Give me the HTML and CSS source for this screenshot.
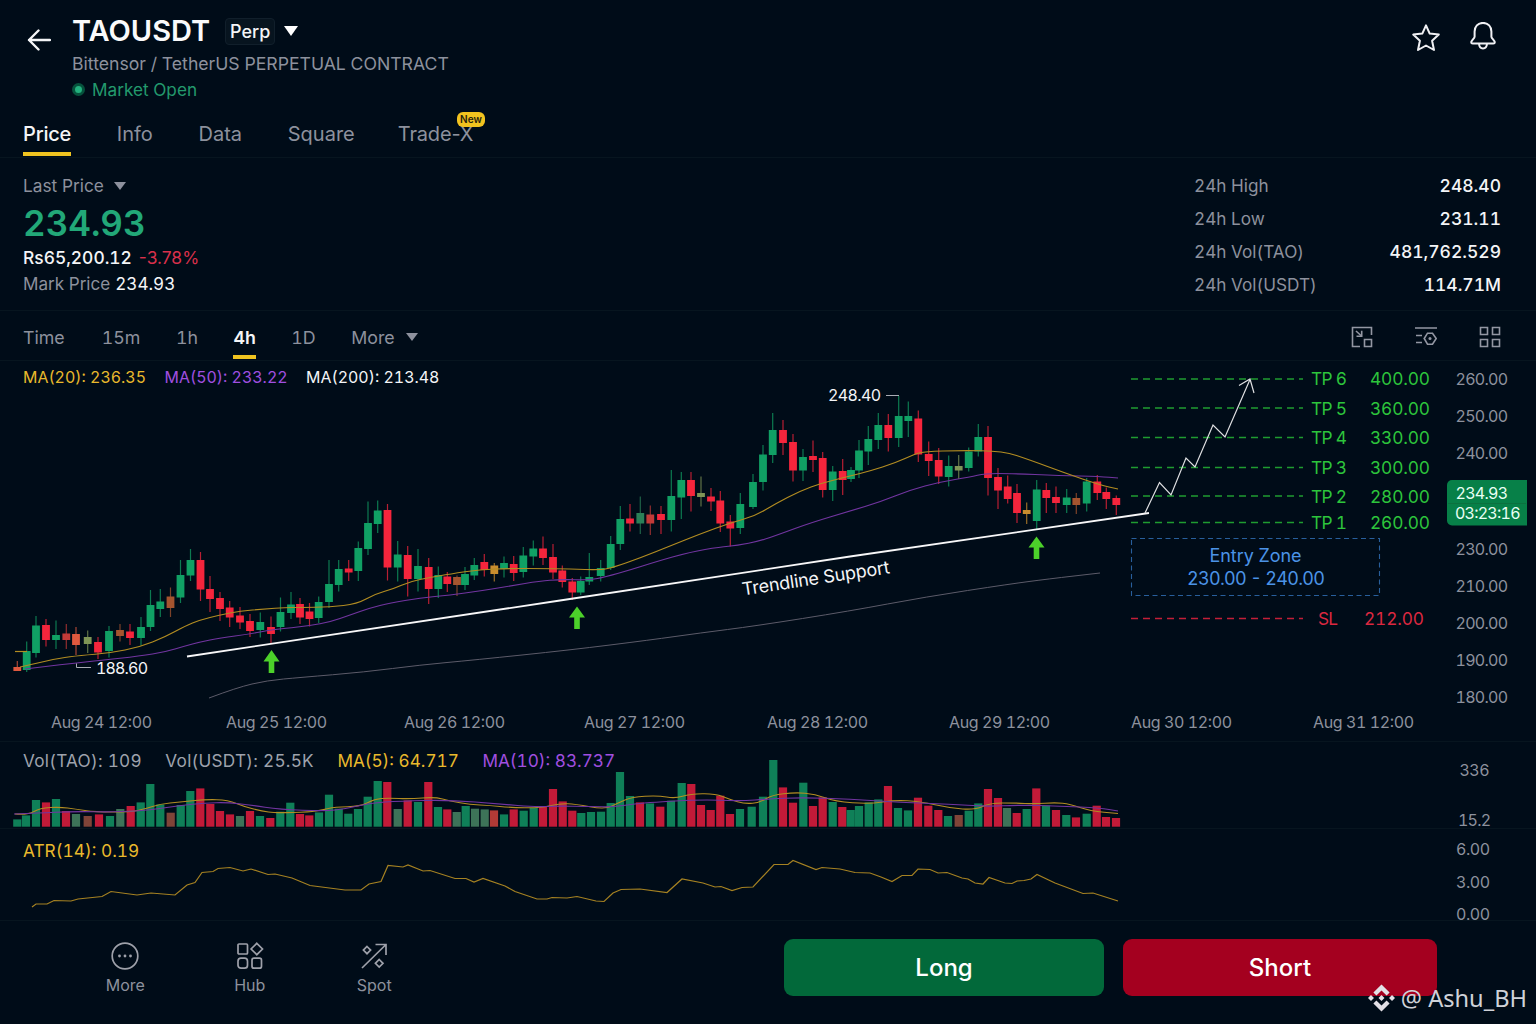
FILE: index.html
```html
<!DOCTYPE html>
<html lang="en">
<head>
<meta charset="utf-8">
<title>TAOUSDT Perp</title>
<link rel="stylesheet" href="styles.css">
</head>
<body>
<div class="app">
  <header class="header">
    <svg class="back" viewBox="0 0 24 22"><path d="M23 11H2M11.500 1.500L2 11l9.500 9.500"/></svg>
    <div class="instrument">
      <div class="title-row">
        <h1 class="symbol">TAOUSDT</h1>
        <span class="perp">Perp</span>
        <svg class="caret-big" viewBox="0 0 14 10"><path d="M0 0h14L7 10z"/></svg>
      </div>
      <div class="subtitle">Bittensor / TetherUS PERPETUAL CONTRACT</div>
      <div class="market"><i class="dot"></i><span>Market Open</span></div>
    </div>
    <div class="header-icons">
      <svg width="30" height="30" viewBox="0 -1 30 30"><path d="M15 2.300l3.700 8.300 9.100 1-6.700 6.200 1.900 9.200L15 22.500 7 27l1.900-9.200-6.700-6.200 9.100-1z"/></svg>
      <svg width="30" height="30" viewBox="0 0 30 30"><path d="M15 .9c-5.200 0-8.400 3.800-8.400 8.600v5.200c0 1.600-3.400 3.900-3.400 5.600 0 .9.700 1.200 1.500 1.200h20.600c.8 0 1.500-.3 1.500-1.200 0-1.700-3.400-4-3.400-5.600V9.500c0-4.800-3.200-8.600-8.400-8.600zM11 21.800c.2 2.900 1.800 4.700 4 4.700s3.800-1.800 4-4.700"/></svg>
    </div>
  </header>

  <nav class="tabs">
    <a class="tab active">Price</a>
    <a class="tab">Info</a>
    <a class="tab">Data</a>
    <a class="tab">Square</a>
    <a class="tab tradex">Trade-X<b class="badge">New</b></a>
  </nav>

  <section class="summary">
    <div class="quote">
      <div class="last"><span>Last Price</span><svg viewBox="0 0 12 8"><path d="M0 0h12L6 8z"/></svg></div>
      <div class="price">234.93</div>
      <div class="fiat"><span>Rs65,200.12</span><span class="down">-3.78%</span></div>
      <div class="mark"><span>Mark Price</span><span class="white">234.93</span></div>
    </div>
    <dl class="stats">
      <div><dt>24h High</dt><dd>248.40</dd></div>
      <div><dt>24h Low</dt><dd>231.11</dd></div>
      <div><dt>24h Vol(TAO)</dt><dd>481,762.529</dd></div>
      <div><dt>24h Vol(USDT)</dt><dd>114.71M</dd></div>
    </dl>
  </section>

  <section class="toolbar">
    <div class="frames">
      <span>Time</span><span>15m</span><span>1h</span><span class="active">4h</span><span>1D</span><span>More</span>
      <svg viewBox="0 0 12 8"><path d="M0 0h12L6 8z"/></svg>
    </div>
    <div class="tools">
      <svg viewBox="0 0 22 22"><path d="M20.500 9V1.500h-19v19H9M5 5l5.500 5M13.500 13.500h7v7h-7z"/><path d="M10.700 4.700v5.500H5.500"/></svg>
      <svg viewBox="0 0 22 22"><path d="M0 2h22M1 9.500h6M1 16.500h6M12.500 7.200h5l3.700 5.300-3.700 5.700h-5L9.200 12.500z"/><circle class="fill" cx="15" cy="12.600" r="1.500"/></svg>
      <svg viewBox="0 0 22 22"><path d="M1.500 1.500h7v7h-7zM13.500 1.500h7v7h-7zM1.500 13.500h7v7h-7zM13.500 13.500h7v7h-7z"/></svg>
    </div>
  </section>

  <section class="pane pane-price">
    <div class="legend">
      <span class="gold">MA(20): 236.35</span><span class="purple">MA(50): 233.22</span><span class="white">MA(200): 213.48</span>
    </div>
    <svg class="plot" viewBox="0 361 1536 380" width="1536" height="380">
      <g id="candles"></g>
      <path class="ma20" d="M15 651.500H27"/>
      <path class="ma200" id="ma200"/>
      <path class="ma50" id="ma50"/>
      <path class="ma20" id="ma20"/>
      <path class="trend" d="M187 656.500L560 600.500 850 556.500 1149 513"/>
      <path class="callout" d="M886 395.500H899"/>
      <path class="callout" d="M76.500 663.500V667.500H91"/>
      <g class="white">
        <text x="828" y="400.500" textLength="53">248.40</text>
        <text x="96" y="673.500" textLength="52">188.60</text>
        <text class="trend-label" x="743" y="595.500" textLength="149" transform="rotate(-8.600 743 595.500)">Trendline Support</text>
      </g>
      <g class="up-arrow">
        <path d="M271.500 650l8 11.500h-5.200V673h-5.600V661.500h-5.200z"/>
        <path d="M577 606.500l8 11h-5.200V629h-5.600V617.500H569z"/>
        <path d="M1036.500 536.500l8 11h-5.200V559h-5.600V547.500h-5.200z"/>
      </g>
      <path class="tp-line" d="M1131 379H1303M1131 408H1303M1131 437.500H1303M1131 467.500H1303M1131 496H1303M1131 522.500H1303"/>
      <path class="sl-line" d="M1131 618.500H1303"/>
      <rect class="entry" x="1131.500" y="538.500" width="248" height="57"/>
      <path class="forecast" d="M1145 513L1159.500 482.500 1171 495 1186 458 1195 467 1213 425 1225 437 1250 379.500M1239 385.500L1250 379 1254 393"/>
      <g class="tp">
        <text x="1311" y="384.500" textLength="36">TP 6</text><text x="1370" y="384.500" textLength="60">400.00</text>
        <text x="1311" y="414.500" textLength="36">TP 5</text><text x="1370" y="414.500" textLength="60">360.00</text>
        <text x="1311" y="443.500" textLength="36">TP 4</text><text x="1370" y="443.500" textLength="60">330.00</text>
        <text x="1311" y="473.500" textLength="36">TP 3</text><text x="1370" y="473.500" textLength="60">300.00</text>
        <text x="1311" y="502.500" textLength="36">TP 2</text><text x="1370" y="502.500" textLength="60">280.00</text>
        <text x="1311" y="529" textLength="36">TP 1</text><text x="1370" y="529" textLength="60">260.00</text>
      </g>
      <g class="entry-label">
        <text x="1209.500" y="561.500" textLength="92">Entry Zone</text>
        <text x="1187" y="585" textLength="138">230.00 - 240.00</text>
      </g>
      <g class="sl"><text x="1318" y="624.500" textLength="20">SL</text><text x="1364" y="624.500" textLength="60">212.00</text></g>
      <g class="axis">
        <text x="1455.500" y="385" textLength="52.500">260.00</text>
        <text x="1455.500" y="421.500" textLength="52.500">250.00</text>
        <text x="1455.500" y="458.500" textLength="52.500">240.00</text>
        <text x="1455.500" y="555" textLength="52.500">230.00</text>
        <text x="1455.500" y="592" textLength="52.500">210.00</text>
        <text x="1455.500" y="628.500" textLength="52.500">200.00</text>
        <text x="1455.500" y="665.500" textLength="52.500">190.00</text>
        <text x="1455.500" y="702.500" textLength="52.500">180.00</text>
        <text x="51" y="727.500" textLength="101">Aug 24 12:00</text>
        <text x="226" y="727.500" textLength="101">Aug 25 12:00</text>
        <text x="404" y="727.500" textLength="101">Aug 26 12:00</text>
        <text x="584" y="727.500" textLength="101">Aug 27 12:00</text>
        <text x="767" y="727.500" textLength="101">Aug 28 12:00</text>
        <text x="949" y="727.500" textLength="101">Aug 29 12:00</text>
        <text x="1131" y="727.500" textLength="101">Aug 30 12:00</text>
        <text x="1313" y="727.500" textLength="101">Aug 31 12:00</text>
      </g>
      <path class="tag" d="M1452 480H1527V525.500H1452a5 5 0 0 1-5-5V485a5 5 0 0 1 5-5z"/>
      <path class="tag-split" d="M1448 503.500H1526"/>
      <g class="tag-text">
        <text x="1455.500" y="499" textLength="52.500">234.93</text>
        <text x="1455" y="519" textLength="65.500">03:23:16</text>
      </g>
    </svg>
  </section>

  <section class="pane pane-volume">
    <div class="legend">
      <span class="vol">Vol(TAO): 109</span><span class="vol">Vol(USDT): 25.5K</span><span class="gold">MA(5): 64.717</span><span class="purple">MA(10): 83.737</span>
    </div>
    <svg class="plot" viewBox="0 742 1536 86" width="1536" height="86">
      <g id="volume"></g>
      <path class="ma20" id="vma5"/>
      <path class="ma50" id="vma10"/>
      <g class="axis"><text x="1459.500" y="776" textLength="30">336</text><text x="1458" y="826" textLength="33">15.2</text></g>
    </svg>
  </section>

  <section class="pane pane-atr">
    <div class="legend"><span class="gold">ATR(14): 0.19</span></div>
    <svg class="plot" viewBox="0 829 1536 91" width="1536" height="91">
      <path class="atr" id="atr"/>
      <g class="axis"><text x="1456" y="855" textLength="34">6.00</text><text x="1456" y="887.500" textLength="34">3.00</text><text x="1456" y="919.500" textLength="34">0.00</text></g>
    </svg>
  </section>

  <footer class="bottom">
    <div class="nav">
      <a><svg viewBox="0 0 28 28"><circle cx="14" cy="14" r="12.800"/><g class="fill"><circle cx="8.500" cy="14" r="1.400"/><circle cx="14" cy="14" r="1.400"/><circle cx="19.500" cy="14" r="1.400"/></g></svg><span>More</span></a>
      <a><svg viewBox="0 0 28 28"><rect x="2" y="2" width="9.500" height="10" rx="1"/><path d="M20.800 1.300l5.700 5.700-5.700 5.700L15.100 7z"/><rect x="2" y="16.200" width="9.500" height="10" rx="3"/><rect x="16" y="16.200" width="9.500" height="10" rx="2"/></svg><span>Hub</span></a>
      <a><svg viewBox="0 0 28 28"><path d="M2 26L26 2.500M15.500 2.500H26V13M7 4.500l3.600 3.600L7 11.700 3.400 8.100zM19.200 17.500l3.800 3.800-3.800 3.800-3.800-3.800z"/></svg><span>Spot</span></a>
    </div>
    <button class="btn long">Long</button>
    <button class="btn short">Short</button>
    <div class="watermark">
      <svg viewBox="0 0 28 28"><path d="M14 0l8.400 8.400-3.100 3.100L14 6.200l-5.300 5.300-3.100-3.100zM14 28l8.400-8.400-3.100-3.100L14 21.800l-5.300-5.300-3.100 3.100zM3.100 10.900L6.200 14l-3.100 3.100L0 14zM24.900 10.900L28 14l-3.100 3.100-3.100-3.100zM14 10.900l3.100 3.100-3.100 3.100-3.100-3.100z"/></svg>
      <span>@ Ashu_BH</span>
    </div>
  </footer>
</div>
<script src="chart.js"></script>
</body>
</html>
```
FILE: styles.css
```css
* { box-sizing: border-box; }
body { margin: 0; background: #000c18; font-family: Inter, "Liberation Sans", sans-serif; font-variant-numeric: tabular-nums; color: #8d919d; }
.app { width: 1536px; height: 1024px; overflow: hidden; display: flex; flex-direction: column; }
.app > * { flex: none; }
h1, dl, dd { margin: 0; }
svg { display: block; flex: none; }
.white { color: #f4f5f7; }
.gold { color: #e9b92c; }
.purple { color: #a04fe0; }

.header { height: 110px; display: flex; padding: 0 38px 0 27px; }
.back { width: 24px; height: 22px; margin-top: 29px; fill: none; stroke: #f4f5f7; stroke-width: 2.4; stroke-linecap: round; stroke-linejoin: round; }
.instrument { margin-left: 21px; padding-top: 14px; }
.title-row { display: flex; align-items: center; height: 34px; }
.symbol { font-size: 29px; font-weight: 600; line-height: 34px; color: #fafafb; }
.perp { margin-left: 15px; height: 27px; width: 50px; text-align: center; border: 1px solid #111f2b; border-radius: 4px; background: #07141f; color: #f4f5f7; font-size: 18px; line-height: 25px; font-weight: 500; }
.caret-big { width: 14px; height: 10px; margin-left: 9px; fill: #fff; }
.subtitle { font-size: 17.650px; line-height: 31px; }
.market { font-size: 17.200px; line-height: 21px; color: #239a6d; display: flex; align-items: center; }
.dot { width: 13px; height: 13px; margin-right: 7px; border-radius: 50%; background: #23b07d; border: 3px solid #06523c; }
.header-icons { margin-left: auto; display: flex; gap: 27px; padding-top: 22px; fill: none; stroke: #f0f1f4; stroke-width: 2; stroke-linejoin: round; }

.tabs { height: 48px; display: flex; gap: 45.700px; padding-left: 23px; border-bottom: 1px solid #07151f; }
.tab { position: relative; font-size: 20px; line-height: 49px; height: 47px; font-variant-numeric: normal; }
.tab.active { color: #f4f5f7; font-weight: 500; letter-spacing: -.2px; }
.tab.active::after { content: ""; position: absolute; left: 0; right: 0; bottom: 1px; height: 4px; background: #f0c420; }
.tradex { margin-left: -2.700px; letter-spacing: -.15px; }
.badge { position: absolute; right: -12px; top: 2px; height: 15px; padding: 0 3.500px; border-radius: 6px; background: #f2c31f; color: #28220c; font-size: 10px; line-height: 15px; font-weight: 600; letter-spacing: 0; }

.summary { height: 153px; display: flex; justify-content: space-between; padding: 11px 35px 0 23px; border-bottom: 1px solid #07151f; }
.last { display: flex; align-items: center; gap: 10px; font-size: 17.300px; line-height: 33px; }
.last svg, .frames svg { width: 12px; height: 8px; fill: #8d919d; }
.price { font-size: 35px; font-weight: 600; line-height: 42px; color: #22a878; }
.fiat { font-size: 17.400px; line-height: 27px; color: #f4f5f7; display: flex; gap: 7px; font-weight: 500; }
.down { color: #d9304b; font-weight: 400; font-variant-numeric: normal; }
.mark { display: flex; gap: 5px; font-size: 17.100px; line-height: 26px; }
.stats { width: 307px; }
.stats div { display: flex; justify-content: space-between; line-height: 33px; }
.stats dt { font-size: 17.200px; }
.stats dd { font-size: 17.500px; color: #f4f5f7; font-weight: 500; }

.toolbar { height: 50px; display: flex; justify-content: space-between; padding: 0 35px 0 23px; border-bottom: 1px solid #07151f; font-size: 17.800px; }
.frames { display: flex; gap: 35.500px; line-height: 53px; }
.frames span { height: 49px; position: relative; }
.frames span:first-child { margin-right: 1.500px; }
.frames .active { color: #f4f5f7; font-weight: 600; }
.frames .active::after { content: ""; position: absolute; left: 0; right: 0; bottom: 1px; height: 4px; background: #f0c420; }
.frames svg { margin: 22px 0 0 -24px; }
.tools { display: flex; gap: 42px; padding-top: 15px; }
.tools svg { width: 22px; height: 22px; fill: none; stroke: #9397a3; stroke-width: 1.6; }
.tools .fill { fill: #9397a3; stroke: none; }

.pane { display: grid; border-bottom: 1px solid #07151f; }
.pane > * { grid-area: 1 / 1; }
.pane-price { height: 381px; }
.pane-volume { height: 87px; }
.pane-atr { height: 92px; }
.legend { display: flex; padding-left: 23px; font-size: 17.200px; }
.pane-price .legend { font-size: 15.950px; line-height: 33px; gap: 18.500px; }
.pane-volume .legend { line-height: 37px; gap: 23.500px; color: #9ea2ac; }
.pane-atr .legend { font-size: 17.300px; line-height: 43px; }
.vol { letter-spacing: .25px; }

.plot { overflow: visible; }
.plot text { font-size: 16px; fill: currentColor; }
.plot path { fill: none; }
.plot .trend-label { font-size: 18px; }
.plot .axis { color: #8d919d; }
.plot .tp text, .plot .sl text { font-size: 17.300px; }
.plot .entry-label text { font-size: 18px; }
.tp { color: #2dc53c; }
.sl { color: #dc2840; }
.entry-label { color: #4b93e6; }
.tag-text { color: #e9fff4; }
.plot .tag { fill: #078048; }
.tag-split { stroke: #0b713f; }
.ma20 { stroke: #b28d22; stroke-width: 1.200; }
.ma50 { stroke: #7135a0; stroke-width: 1.200; }
.ma200 { stroke: #5c5b69; stroke-width: 1; }
.atr { stroke: #a58222; stroke-width: 1.200; }
.trend { stroke: #f7f7f8; stroke-width: 1.800; }
.callout { stroke: #a9acb4; }
.plot .up-arrow path { fill: #4cd12a; }
.tp-line { stroke: #1f9c30; stroke-width: 1.300; stroke-dasharray: 7 5; }
.sl-line { stroke: #c21f38; stroke-width: 1.300; stroke-dasharray: 7 5; }
.entry { fill: none; stroke: #285f9c; stroke-width: 1.100; stroke-dasharray: 5 3.500; }
.forecast { stroke: #dfe0e2; stroke-width: 1.200; }

.g { fill: #10a064; stroke: #10a064; }
.r { fill: #f5253c; stroke: #f5253c; }
.d { fill: #c23a38; stroke: #c23a38; }
.b { fill: #a5542f; stroke: #a5542f; }
.s { fill: #e0593f; stroke: #e0593f; }
.o { fill: #7f9556; stroke: #7f9556; }
.y { fill: #c98d2e; stroke: #c98d2e; }
.m { fill: #2a8058; stroke: #2a8058; }
.body { stroke: none; }
.wick { stroke-width: 1.200; opacity: .75; }
#volume rect { stroke: none; }
#volume .g { fill: #0f8058; }
#volume .r { fill: #c21a38; }
#volume .m { fill: #3d7358; }
#volume .b { fill: #804438; }
#volume .s { fill: #b23a36; }

.bottom { height: 103px; display: flex; padding: 18px 0 0 63px; position: relative; }
.nav { display: grid; grid-template-columns: repeat(3, 124.500px); width: 721px; }
.nav a { display: flex; flex-direction: column; align-items: center; font-size: 16px; line-height: 24px; padding-top: 3px; gap: 3px; }
.nav svg { width: 28px; height: 28px; fill: none; stroke: #9ea1aa; stroke-width: 1.700; }
.nav .fill { fill: #9ea1aa; stroke: none; }
.btn { height: 57px; border: 0; border-radius: 9px; color: #fff; font: 500 24px/57px Inter, sans-serif; padding: 0; }
.long { width: 320px; background: #02693a; }
.short { width: 314px; margin-left: 19px; background: #a4001f; }
.watermark { position: absolute; right: 9px; top: 60px; display: flex; align-items: center; gap: 6px; font-family: "Noto Sans", sans-serif; font-size: 23.600px; line-height: 34px; color: #cfd2d8; }
.watermark svg { width: 27px; height: 28px; fill: #e3e0e6; }
```
FILE: chart.js
```js
// x, wick top, body top, body bottom, wick bottom, tone
const candles = [
[17.3,661,667,671,671,'s'],[26.7,641.5,651,670,672,'g'],[36,616,625.5,653,657.5,'g'],[46,619,625,640,646.5,'r'],[56,620.5,635,640,649,'g'],[66.3,624,633.5,640,649,'d'],[76,627,634,645,655,'s'],[87.7,630.5,637,644,653,'o'],[98,637,642,652.5,659,'r'],[109,626,631,651,657.5,'g'],
[120,624,630,636,641.5,'b'],[130,624,631.5,638,645,'r'],[141,617,627,638,645.5,'g'],[150.5,590,605,627,631,'g'],[160.3,589,601.5,609,617,'g'],[170.5,587.5,596.5,608,617,'b'],[180.5,560,575,597.5,603,'g'],[190.5,549,560,575.5,581,'g'],[200.5,552,560,589.5,601,'r'],[210,576,589,599,612,'r'],
[220,592,598,609,621,'r'],[229.7,601,607.5,617.5,627,'r'],[240,607,615.5,622.5,629,'r'],[250,614,621,631,637,'r'],[260.3,612.5,622,630,637.5,'g'],[271,616.5,627,634,644,'r'],[280.5,597.5,612,627,631.5,'g'],[291,592,604.5,613,619,'g'],[300,598,604,617.5,624,'r'],[309.5,603,611.5,619,626.5,'r'],
[318.7,596.5,602,618,623,'g'],[329,560,584,602,608,'g'],[338.7,560,569,585,591.5,'g'],[348.7,560,568.5,572.5,581,'r'],[358.3,541.5,548,571,581,'g'],[368,501.5,523,549,555,'g'],[377.7,500.5,510.5,524,533,'g'],[387.5,504,510,567.5,580.5,'r'],[397.7,541,554.5,567.5,581.5,'g'],[407.7,546,555,579,596.5,'r'],
[418,549,566,579,591.5,'g'],[428.7,558,567,589,604,'r'],[438.3,566.5,575,589,598,'g'],[447.3,572,576.5,584,592,'r'],[457,575.5,577,585,596,'b'],[465,567,574,585,590,'g'],[474.3,558,565,575.5,580,'g'],[484.3,554,562,570,576.5,'r'],[494.3,563,565.5,574,581.5,'y'],[504,556.5,563,569,577.5,'g'],
[513.7,556,564,573,581,'r'],[523.3,547,555.5,572,577.5,'g'],[533.3,540.5,548.5,556.5,565.5,'g'],[543,536.5,548.5,558,565,'r'],[553,544,557,572.5,579,'r'],[562.3,565.5,570.5,582,587.5,'r'],[572.3,578,581.5,592.5,600,'r'],[580.7,576.5,581,592.5,595,'g'],[589.3,553,577,581.5,585,'g'],[600.7,560,568,576,581.5,'g'],
[610.7,536,544,568,570,'g'],[620.3,506,519,544,550,'g'],[630,504,518.5,523.5,531.5,'r'],[640.3,496.5,513,523.5,534,'m'],[650.3,505.5,514.5,523.5,535,'d'],[661,506,514,520,534,'r'],[671.3,470,496,520,531.5,'g'],[681.3,472,480,497.5,519,'g'],[691,472,480,496,511.5,'r'],[701,476.5,493,497,506.5,'o'],
[711,488,496.5,501.5,511,'r'],[720.3,491,500.5,523.5,532,'r'],[730.3,515,521.5,528.5,546.5,'r'],[740.3,493,504,528,534,'g'],[753,474,482,507,509,'g'],[763,445,454.5,482,490.5,'g'],[772.7,413,430,455,463,'g'],[783,420,430,443,455,'r'],[793,434,442,470.5,481.5,'r'],[803,449,457,470.5,481,'g'],
[813,440.5,456,460,472,'r'],[822.7,452,458,490,497.5,'r'],[832.7,466,471.5,490,501,'g'],[842.7,459,471,480,495,'r'],[851,467,470,479,482,'g'],[859,440,450.5,470.5,478,'g'],[868.3,426,439,451.5,465,'g'],[878.3,413,425,440,449,'g'],[888.3,414,425,438,451.5,'r'],[898.7,396,416,438,447,'g'],
[908.3,401.5,416,421,437,'g'],[918.3,410.5,418.5,454.5,462,'r'],[928.7,441.5,454,461,476,'r'],[938.7,448,460,476.5,484,'r'],[948.7,455.5,466,477,486.5,'g'],[958.7,455,466,470.5,479,'o'],[968.7,447.5,451.5,468,471.5,'g'],[978.3,424,437,451.5,456.5,'g'],[988,426,437,478,495.5,'r'],[998,468,477,490.5,509,'r'],
[1007.7,475.5,486.5,499,503.5,'r'],[1017,484,493,513,523,'r'],[1026.7,502.5,510,514,524,'y'],[1036.7,480,489.5,521,529,'g'],[1046.3,483,490,498,513,'r'],[1056,486.5,497,503,513,'r'],[1066.7,489,497.5,505,513,'g'],[1076.3,493,498,505,514,'b'],[1086.7,478,481.5,503.5,511.5,'g'],[1097.3,475,481.5,493,500,'r'],
[1106.3,487.5,492,499,509,'r'],[1116.3,495.5,498,505,515,'r']];

// x, height above the baseline, tone
const volume = [
[17.3,7.3,'g'],[26,11.3,'g'],[36,26.7,'g'],[46,24.3,'r'],[56,27.7,'g'],[66,15.7,'r'],[76,12.7,'m'],[87.7,10.7,'b'],[99,12.3,'r'],[110,10.7,'g'],[120.3,17.7,'m'],[130.7,20.7,'r'],[140.7,24.3,'g'],[150.3,42.7,'g'],[160.3,22.3,'g'],[170.7,14,'b'],[180.7,21.7,'g'],[190.3,35.7,'g'],[200.3,38.3,'r'],[210.3,22.7,'r'],[220,15.7,'r'],[230,12.3,'r'],[240,10.7,'m'],[250,15.7,'r'],[260,10.7,'g'],[270.3,8.7,'r'],[280.3,15,'g'],[290.3,24,'g'],[300,12.7,'r'],[309.3,11.3,'r'],[319,14.3,'g'],[329,32,'g'],[338.7,18,'g'],[348.3,13,'g'],[358,17.7,'g'],[367.7,30,'g'],[377.7,45.7,'g'],[387.3,44.7,'r'],
[397.7,17.7,'m'],[407.7,26.3,'r'],[418,24.7,'g'],[428.3,44.7,'r'],[438,19.7,'g'],[447.3,17.3,'r'],[456.7,14.7,'m'],[465.7,20.7,'g'],[475,18,'m'],[484.7,17.3,'m'],[494,16.3,'s'],[504,12.3,'g'],[513.7,17.3,'r'],[523.7,16,'g'],[533.7,19,'g'],[543,20,'r'],[553,37.7,'r'],[562.7,25.3,'r'],[572.3,16,'r'],[581.3,13.7,'g'],[591,14.7,'g'],[601,15,'g'],[610.7,23.7,'g'],[620,54.7,'g'],[630,30.7,'g'],[640,24.3,'r'],[650,23.3,'g'],[660.3,20,'r'],[671,26,'g'],[681.7,43.7,'g'],[691.3,42.7,'r'],[701,21.7,'r'],[710.7,16.7,'r'],[720.3,31,'r'],[730,12.7,'r'],[740,17.7,'g'],[751.7,20,'g'],[763,30,'g'],[773.3,66.7,'g'],[783,39.3,'r'],
[793,24,'r'],[803.3,44,'g'],[813,20.7,'r'],[822.7,29.3,'r'],[832.7,24.7,'g'],[842.3,19.7,'r'],[850.7,16.7,'g'],[859,20.7,'g'],[868.7,24.3,'g'],[878.3,27.3,'g'],[888,40.7,'r'],[898,18.7,'g'],[908,16.3,'g'],[918,29,'r'],[928.3,21,'r'],[938.3,16.7,'r'],[948,10.7,'g'],[958.7,11.7,'b'],[968.7,16,'g'],[978.3,23.3,'g'],[988,37.7,'r'],[998,28.7,'r'],[1007,18.7,'m'],[1016.7,13.7,'r'],[1026.7,17.7,'g'],[1036.3,38.3,'r'],[1046,21.3,'g'],[1056,16.7,'r'],[1066.3,11.7,'g'],[1076,9.3,'r'],[1086.7,13,'g'],[1096.7,21,'r'],[1106,9.7,'r'],[1116,8.7,'r']];

const lines = {
  ma20: [20,667,33,664,60,658,80,655.5,110,653,140,647,165,637,185,626,200,620,220,615,240,611,265,609,285,607.5,300,607.5,330,607,357,604,375,594,393,589,410,581.5,430,577.5,450,574,480,569.5,510,568.5,540,568.5,570,569,600,570,613,567.5,640,558,670,546,700,534,730,523,755,516,775,504,800,491,822,483,850,476,870,471,895,463,915,454,925,451.5,960,450.5,1003,451,1030,460,1065,473,1100,485,1118,489],
  ma50: [25,669,45,666.5,75,663,100,660.5,140,656,165,652,185,646,200,642,220,638,250,634,270,630,285,628.5,310,625.5,330,622,350,615,370,608,390,603,420,598,450,595,480,591,510,586,540,581,560,579.5,590,580,605,577,630,570,655,562,690,552,720,547,737,545.5,760,541,780,534,810,523,850,511,880,502,910,490,940,482,970,477,985,473.5,1010,473.5,1060,475.5,1100,476.5,1118,478],
  ma200: [209,698,237,687.5,267,680.5,300,677.5,365,672,420,665,474,660,570,650,650,640,700,633,755,626,850,611,925,597,1010,584,1048,579,1100,573],
  vma5: [15,814,28,815,40,808,60,807,75,809,95,812,130,812,145,809,160,804,180,802,205,799.5,228,800,245,807,262,811,275,813,310,812,322,810,335,807,360,806.5,375,799,388,798,410,799,435,797,450,801,470,804.5,490,805.5,510,807.5,540,808,560,803.5,575,804,605,809.5,618,803,632,797,658,795.5,675,798.5,690,794,715,793.5,730,799.5,745,804,760,802.5,772,795,795,792.5,815,794,835,801.5,870,804,895,800,920,801.5,950,808,975,810,990,803,1015,803,1035,804,1055,802.5,1070,804,1090,811,1118,813.5],
  vma10: [14,814,40,813,70,811.5,120,812,150,810,180,805.5,205,803,228,802.5,250,805,280,809.5,325,811,345,809,370,803,400,801,450,800,500,804,535,807,555,806,590,806.5,615,807,640,803,700,799.5,740,801,770,799,800,797.5,850,799,900,802.5,950,804,985,806.5,1020,805,1060,806,1100,808,1118,811],
  atr: [32,907,36,904,47,904,54,900.5,71,901,78,899,102,896.5,111,891.5,137,895,151,893,175,895,187,885,195,882.5,202,872.5,213,871.5,218,868.5,230,867.5,243,871,251,869,268,874.5,275,874,292,878,310,885.5,345,890,361,890,369,884,381,881.5,388,865.5,403,867,408,865,423,871,430,870.5,455,878.5,466,878.5,474,882,483,878.5,505,886,515,891.5,537,899,547,899,552,897.5,567,898,577,896.5,596,901,604,901.5,613,893,621,889.5,640,889,667,892.5,682,879,703,883,715,887,721,886.5,732,890.5,742,887.5,753,887,774,864.5,788,864.5,793,860.5,816,869.5,822,867.5,840,869,855,872.5,870,873,881,877,892,881.5,902,875.5,912,875.5,918,869,930,869.5,938,873,947,872.5,962,878,968,879,975,883,983,884,989,877.5,1005,883,1012,883.5,1017,881,1024,880.5,1031,879,1037,874.5,1055,883,1083,893.5,1093,893,1118,901]
};

document.getElementById('candles').innerHTML = candles.map(([x, hi, top, bottom, lo, tone]) =>
  `<path class="wick ${tone}" d="M${x} ${hi}V${lo}"/><rect class="${tone} body" x="${x - 3.9}" y="${top}" width="7.8" height="${bottom - top}"/>`).join('');

document.getElementById('volume').innerHTML = volume.map(([x, h, tone]) =>
  `<rect class="${tone}" x="${x - 4.1}" y="${826.7 - h}" width="8.2" height="${h}"/>`).join('');

// Smooth averages pass through the midpoints of neighbouring points; ATR keeps its corners.
for (const [id, p] of Object.entries(lines)) {
  let d = `M${p[0]} ${p[1]}`;
  for (let i = 2; i < p.length; i += 2) {
    if (id === 'atr' || i === p.length - 2) d += `L${p[i]} ${p[i + 1]}`;
    else d += `Q${p[i]} ${p[i + 1]} ${(p[i] + p[i + 2]) / 2} ${(p[i + 1] + p[i + 3]) / 2}`;
  }
  document.getElementById(id).setAttribute('d', d);
}
```
